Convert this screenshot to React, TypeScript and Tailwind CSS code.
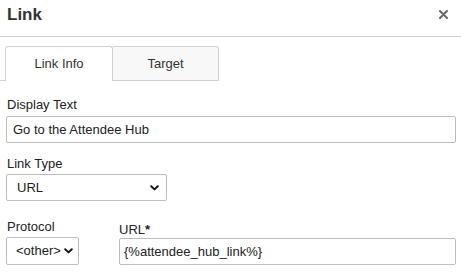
import React from "react";

function Chevron() {
  return (
    <svg width="9" height="6" viewBox="0 0 9 6">
      <path d="M1.2 1.2 L4.5 4.4 L7.8 1.2" fill="none" stroke="#111" strokeWidth="1.9" strokeLinecap="round" strokeLinejoin="round" />
    </svg>
  );
}

export default function App() {
  return (
    <div
      className="w-[461px] h-[273px] bg-white overflow-hidden text-[#222]"
      style={{ fontFamily: '"Liberation Sans", Arial, sans-serif' }}
    >
      <div className="h-[37px] flex items-start justify-between pl-[7px] pr-[13px] pt-[5px] border-b border-[#d1d1d1]">
        <span className="text-[17px] font-bold text-[#333] leading-[20px]">Link</span>
        <svg width="9" height="9" viewBox="0 0 9 9" className="mt-[5px]">
          <path d="M1 1 L8 8 M8 1 L1 8" stroke="#666" strokeWidth="2" strokeLinecap="round" />
        </svg>
      </div>
      <div className="pt-[9px] flex">
        <div className="w-[5px] h-[35px] border-b border-[#d1d1d1]" />
        <div className="w-[108px] h-[35px] border border-b-0 border-[#d1d1d1] rounded-t-[3px] bg-white flex items-center justify-center text-[13px] text-[#333]">
          Link Info
        </div>
        <div className="w-[106px] h-[35px] border border-l-0 border-[#d1d1d1] rounded-tr-[3px] bg-[#f8f8f8] flex items-center justify-center text-[13px] text-[#333]">
          Target
        </div>
      </div>
      <div className="px-[6px] pt-[16px] text-[13px]">
        <div className="leading-[16px] pl-px">Display Text</div>
        <div className="mt-[3px] h-[27px] w-[450px] border border-[#bdbdbd] rounded-[2px] flex items-center px-[6px]">
          Go to the Attendee Hub
        </div>
        <div className="mt-[13px] leading-[16px] pl-px">Link Type</div>
        <div className="mt-[2px] h-[27px] w-[161px] border border-[#bdbdbd] rounded-[2px] flex items-center justify-between pl-[10px] pr-[7px]">
          <span>URL</span>
          <Chevron />
        </div>
        <div className="mt-[18px] flex gap-[40px]">
          <div>
            <div className="leading-[16px] pl-px">Protocol</div>
            <div className="mt-[2px] h-[28px] w-[73px] border border-[#bdbdbd] rounded-[2px] flex items-center justify-between pl-[9px] pr-[5px]">
              <span>&lt;other&gt;</span>
              <Chevron />
            </div>
          </div>
          <div>
            <div className="mt-[3px] leading-[16px]">
              URL<span className="font-bold">*</span>
            </div>
            <div className="h-[27px] w-[337px] border border-[#bdbdbd] rounded-[2px] flex items-center pl-[4px]">
              {"{%attendee_hub_link%}"}
            </div>
          </div>
        </div>
      </div>
    </div>
  );
}
